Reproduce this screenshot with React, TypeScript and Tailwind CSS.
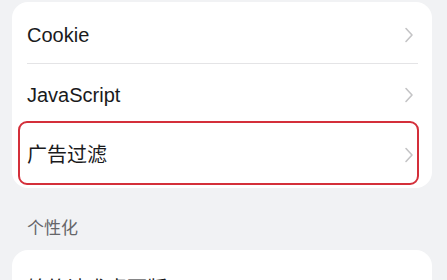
const font = { fontFamily: '"Liberation Sans", "Noto Sans CJK SC", sans-serif' };

function Chevron() {
  return (
    <svg width="10" height="16" viewBox="0 0 10 16" fill="none" className="shrink-0">
      <path d="M2 1.5 L8 8 L2 14.5" stroke="#c4c4c6" strokeWidth="1.6" strokeLinecap="round" strokeLinejoin="round" />
    </svg>
  );
}

function Row({ label, divider, highlight }: { label: string; divider?: boolean; highlight?: boolean }) {
  return (
    <div className="relative h-[60px]">
      {highlight && (
        <div className="absolute left-[6px] right-[13px] top-[-4px] bottom-0 rounded-[9px] border-[2.5px] border-[#d42f3a]" />
      )}
      <div className="flex h-full items-center justify-between pl-[15px] pr-[18px]">
        <span className="text-[20px] text-[#1a1a1c]">{label}</span>
        <Chevron />
      </div>
      {divider && <div className="absolute bottom-[1px] left-[15px] right-[14px] h-px bg-[#e4e4e6]" />}
    </div>
  );
}

export default function App() {
  return (
    <div className="h-[280px] w-[447px] overflow-hidden bg-[#f1f2f4]" style={font}>
      <div className="ml-[12px] mr-[15px] mt-[2px] rounded-[16px] bg-white pb-[3px] pt-[3px]">
        <Row label="Cookie" divider />
        <Row label="JavaScript" />
        <Row label="广告过滤" highlight />
      </div>
      <div className="mt-[29px] pl-[27px] text-[17px] leading-[24px] text-[#656568]">个性化</div>
      <div className="ml-[12px] mr-[15px] mt-[9px] rounded-[16px] bg-white pt-[9px]">
        <Row label="始终请求桌面版" />
      </div>
    </div>
  );
}
